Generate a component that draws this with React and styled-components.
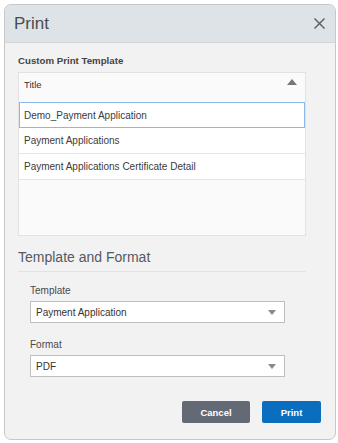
import React from "react";
import styled, { createGlobalStyle } from "styled-components";

const Global = createGlobalStyle`
  html, body { margin: 0; padding: 0; background: #ffffff; }
  body { font-family: "Liberation Sans", Arial, sans-serif; }
  * { box-sizing: border-box; }
`;

const Dialog = styled.div`
  margin: 4px 0 0 4px;
  width: 332px;
  border: 1px solid #c6c8ca;
  border-radius: 7px;
  overflow: hidden;
  background: #f2f2f2;
  display: flex;
  flex-direction: column;
`;

const Header = styled.div`
  height: 38px;
  background: #dde3e6;
  border-bottom: 1px solid #cfd5d8;
  display: flex;
  align-items: center;
  justify-content: space-between;
  padding: 0 10px 0 9px;
`;

const Title = styled.h1`
  margin: 0;
  font-size: 17px;
  font-weight: 400;
  color: #474c52;
  line-height: 20px;
`;

const CloseButton = styled.button`
  border: none;
  background: none;
  padding: 0;
  width: 12px;
  height: 12px;
  display: flex;
  align-items: center;
  justify-content: center;
  cursor: pointer;
`;

const Body = styled.div`
  padding: 12px 13px 16px 13px;
  display: flex;
  flex-direction: column;
`;

const Content = styled.div`
  width: 288px;
  display: flex;
  flex-direction: column;
`;

const SectionLabel = styled.div`
  font-size: 9.7px;
  line-height: 12px;
  font-weight: 700;
  color: #444;
`;

const Table = styled.div`
  margin-top: 5px;
  height: 164px;
  border: 1px solid #e2e2e2;
  background: #fafafa;
  display: flex;
  flex-direction: column;
`;

const TableHead = styled.div`
  height: 29px;
  display: flex;
  justify-content: space-between;
  align-items: flex-start;
  padding: 6px 8px 0 5px;
  font-size: 9.5px;
  line-height: 11px;
  color: #333;
`;

const Row = styled.div`
  height: 26px;
  display: flex;
  align-items: center;
  background: #ffffff;
  font-size: 10px;
  color: #3b3b3b;
  padding-left: ${(p) => (p.$selected ? "4px" : "5px")};
  border: ${(p) => (p.$selected ? "1px solid #8cb9ea" : "none")};
  border-bottom: 1px solid ${(p) => (p.$selected ? "#8cb9ea" : "#e6e6e6")};
`;

const SectionTitle = styled.h2`
  margin: 13px 0 0 0;
  padding-bottom: 6px;
  border-bottom: 1px solid #e3e3e3;
  font-size: 14px;
  line-height: 16px;
  font-weight: 400;
  color: #555a60;
`;

const Form = styled.div`
  padding: 13px 0 0 12px;
  display: flex;
  flex-direction: column;
`;

const Field = styled.div`
  display: flex;
  flex-direction: column;
  gap: 4px;
  & + & { margin-top: 16px; }
`;

const FieldLabel = styled.label`
  font-size: 10px;
  line-height: 12px;
  color: #4a4a4a;
`;

const Select = styled.div`
  width: 255px;
  height: 22px;
  background: #ffffff;
  border: 1px solid #bfbfbf;
  display: flex;
  align-items: center;
  justify-content: space-between;
  padding: 0 8px 0 5px;
  font-size: 10px;
  color: #333;
`;

const Footer = styled.div`
  margin-top: 24px;
  display: flex;
  justify-content: flex-end;
  gap: 12px;
  padding-right: 1px;
`;

const Button = styled.button`
  height: 22px;
  width: ${(p) => p.$w}px;
  border: none;
  border-radius: 2px;
  background: ${(p) => (p.$primary ? "#0a6dbd" : "#636a75")};
  color: #ffffff;
  font-family: "Liberation Sans", Arial, sans-serif;
  font-size: 9.5px;
  font-weight: 700;
  padding: 0;
`;

const UpTriangle = () => (
  <svg width="10" height="6" viewBox="0 0 10 6">
    <polygon points="0,6 5,0 10,6" fill="#777" />
  </svg>
);

const DownCaret = () => (
  <svg width="8" height="5" viewBox="0 0 8 5">
    <polygon points="0,0 8,0 4,5" fill="#8a8a8a" />
  </svg>
);

export default function App() {
  return (
    <>
      <Global />
      <Dialog>
        <Header>
          <Title>Print</Title>
          <CloseButton aria-label="Close">
            <svg width="11" height="11" viewBox="0 0 11 11">
              <path d="M0.5 0.5 L10.5 10.5 M10.5 0.5 L0.5 10.5" stroke="#555b61" strokeWidth="1.4" />
            </svg>
          </CloseButton>
        </Header>
        <Body>
          <Content>
            <SectionLabel>Custom Print Template</SectionLabel>
            <Table>
              <TableHead>
                <span>Title</span>
                <UpTriangle />
              </TableHead>
              <Row $selected>Demo_Payment Application</Row>
              <Row>Payment Applications</Row>
              <Row>Payment Applications Certificate Detail</Row>
            </Table>
            <SectionTitle>Template and Format</SectionTitle>
            <Form>
              <Field>
                <FieldLabel>Template</FieldLabel>
                <Select>
                  <span>Payment Application</span>
                  <DownCaret />
                </Select>
              </Field>
              <Field>
                <FieldLabel>Format</FieldLabel>
                <Select>
                  <span>PDF</span>
                  <DownCaret />
                </Select>
              </Field>
            </Form>
          </Content>
          <Footer>
            <Button $w={68}>Cancel</Button>
            <Button $w={59} $primary>Print</Button>
          </Footer>
        </Body>
      </Dialog>
    </>
  );
}
